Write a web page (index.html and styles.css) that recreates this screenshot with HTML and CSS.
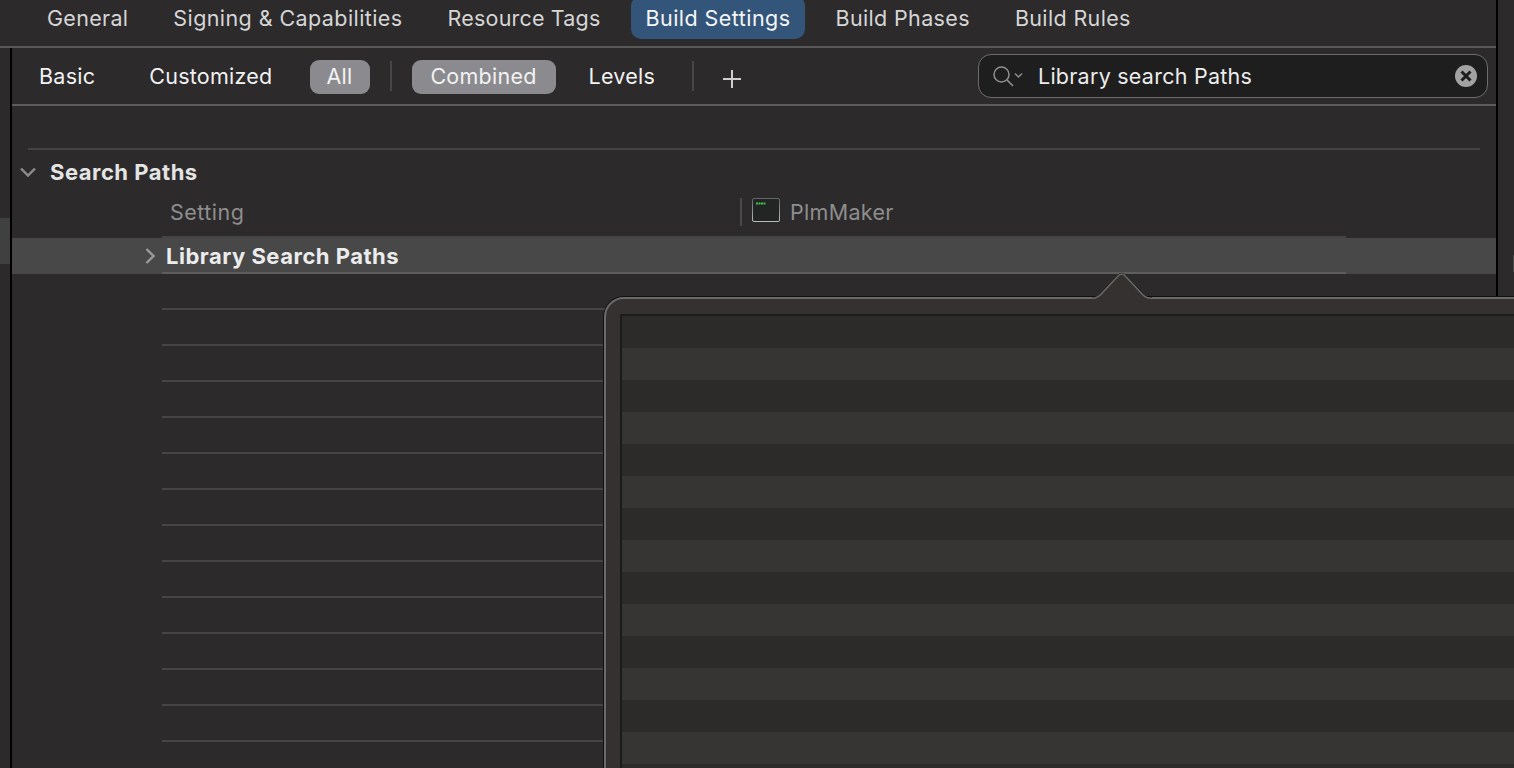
FILE: index.html
```html
<!DOCTYPE html>
<html lang="en">
<head>
<meta charset="utf-8">
<title>Build Settings</title>
<link rel="stylesheet" href="styles.css">
</head>
<body>
<div class="window">
  <div class="content">
    <nav class="tabs">
      <span class="tab tab-general">General</span>
      <span class="tab tab-signing">Signing &amp; Capabilities</span>
      <span class="tab tab-resource">Resource Tags</span>
      <span class="tab tab-active">Build Settings</span>
      <span class="tab">Build Phases</span>
      <span class="tab">Build Rules</span>
    </nav>
    <div class="body">
      <aside class="rail"><div class="rail-mark"></div></aside>
      <main class="main">
        <div class="filters">
          <span class="filter f-basic">Basic</span>
          <span class="filter f-custom">Customized</span>
          <span class="filter pill f-all">All</span>
          <span class="sep sep-a"></span>
          <span class="filter pill f-combined">Combined</span>
          <span class="filter f-levels">Levels</span>
          <span class="sep sep-b"></span>
          <svg class="plus" width="18" height="18" viewBox="0 0 18 18"><path d="M9 0v18M0 9h18" stroke="#cfcfcf" stroke-width="2" fill="none"/></svg>
          <div class="search">
            <svg class="search-icon" width="34" height="26" viewBox="0 0 34 26"><circle cx="10.5" cy="11.5" r="7.5" fill="none" stroke="#8e8e8e" stroke-width="1.5"/><path d="M16 17l6 6" stroke="#8e8e8e" stroke-width="1.7" fill="none"/><path d="M24 10.5l3.5 3.5 3.5-3.5" stroke="#8e8e8e" stroke-width="1.5" fill="none"/></svg>
            <span class="search-text">Library search Paths</span>
            <svg class="clear" width="22" height="22" viewBox="0 0 22 22"><circle cx="11" cy="11" r="11" fill="#a3a3a3"/><path d="M6.5 6.5l9 9M15.5 6.5l-9 9" stroke="#1e1e1e" stroke-width="3" fill="none"/></svg>
          </div>
        </div>
        <div class="section-rule"></div>
        <div class="section">
          <svg class="disclosure" width="18" height="12" viewBox="0 0 18 12"><path d="M2 2.5l7 7 7-7" stroke="#8d8d8d" stroke-width="2.4" fill="none"/></svg>
          <span class="section-title">Search Paths</span>
        </div>
        <div class="head-row">
          <span class="head-setting">Setting</span>
          <span class="head-sep"></span>
          <svg class="target-icon" width="28" height="24" viewBox="0 0 28 24"><defs><linearGradient id="termEdge" x1="0" y1="0" x2="0" y2="1"><stop offset="0" stop-color="#5f6668"/><stop offset="1" stop-color="#b4bcbe"/></linearGradient></defs><rect x=".5" y=".5" width="27" height="23" rx="1.5" fill="#232524" stroke="url(#termEdge)"/><path d="M4 5.5h10" stroke="#3fbf55" stroke-width="2.2" stroke-dasharray="2 .5" fill="none"/></svg>
          <span class="head-target">PlmMaker</span>
        </div>
        <div class="row row-selected">
          <div class="row-inner">
            <svg class="expander" width="12" height="18" viewBox="0 0 12 18"><path d="M2.5 2l7 7-7 7" stroke="#9a9a9a" stroke-width="2.4" fill="none"/></svg>
            <span class="row-title">Library Search Paths</span>
          </div>
        </div>
        <div class="row"><div class="row-inner"></div></div>
        <div class="row"><div class="row-inner"></div></div>
        <div class="row"><div class="row-inner"></div></div>
        <div class="row"><div class="row-inner"></div></div>
        <div class="row"><div class="row-inner"></div></div>
        <div class="row"><div class="row-inner"></div></div>
        <div class="row"><div class="row-inner"></div></div>
        <div class="row"><div class="row-inner"></div></div>
        <div class="row"><div class="row-inner"></div></div>
        <div class="row"><div class="row-inner"></div></div>
        <div class="row"><div class="row-inner"></div></div>
        <div class="row"><div class="row-inner"></div></div>
        <div class="row"><div class="row-inner"></div></div>
      </main>
    </div>
  </div>
  <div class="right-rail"><div class="right-mark"></div></div>
  <div class="popover">
    <svg class="popover-arrow" width="60" height="28" viewBox="0 0 60 28"><path d="M0 27.3C5 27.3 8 25 11.3 20.7L25.3 5.7Q29.7 .5 34 5.7L48 20.7C51.5 25 54 27.3 60 27.3V28H0Z" fill="#353130"/><path d="M0 26.5C5 26.5 7.5 24.5 10.7 20.2L24.7 5.2Q29.7 -.5 34.6 5.2L48.6 20.2C52 24.5 54.5 26.5 60 26.5" fill="none" stroke="#111" stroke-width="1"/><path d="M0 27.3C5 27.3 8 25 11.3 20.7L25.3 5.7Q29.7 .5 34 5.7L48 20.7C51.5 25 54 27.3 60 27.3" fill="none" stroke="#6a6a6a" stroke-width="1.5"/></svg>
    <div class="popover-table">
      <div class="stripe"></div><div class="stripe alt"></div>
      <div class="stripe"></div><div class="stripe alt"></div>
      <div class="stripe"></div><div class="stripe alt"></div>
      <div class="stripe"></div><div class="stripe alt"></div>
      <div class="stripe"></div><div class="stripe alt"></div>
      <div class="stripe"></div><div class="stripe alt"></div>
      <div class="stripe"></div><div class="stripe alt"></div>
      <div class="stripe"></div><div class="stripe alt"></div>
    </div>
  </div>
</div>
</body>
</html>
```
FILE: styles.css
```css
* { box-sizing: border-box; }
html, body { margin: 0; padding: 0; height: 100%; overflow: hidden; }
body {
  background: #2c2a2b;
  font-family: Inter, "Liberation Sans", sans-serif;
  font-size: 22px;
}
.window { position: relative; display: flex; width: 1514px; height: 768px; overflow: hidden; }
.content { width: 1496px; display: flex; flex-direction: column; }
.right-rail { flex: 1; border-left: 2px solid #000; padding-top: 255px; }
.right-mark { width: 1px; height: 17px; margin-left: auto; background: #4a4a4a; }

/* tabs */
.tabs {
  height: 48px;
  flex: none;
  display: flex;
  align-items: flex-start;
  gap: 17px;
  padding: 0 0 0 33px;
  border-bottom: 2px solid #575757;
}
.tab {
  height: 39px;
  padding: 0 14px 4px;
  display: flex;
  align-items: center;
  color: #d6d6d6;
  font-size: 21.5px;
  letter-spacing: 0.35px;
  white-space: nowrap;
}
.tab-general { letter-spacing: 0.3px; }
.tab-signing { letter-spacing: 0.42px; }
.tab-resource { letter-spacing: 0.18px; }
.tab-active {
  height: 43px;
  margin-top: -4px;
  padding-top: 4px;
  background: #34557a;
  color: #f4f5f6;
  letter-spacing: 0.45px;
  border-radius: 10px;
}

/* layout body */
.body { flex: 1; display: flex; min-height: 0; }
.rail { width: 12px; flex: none; border-right: 2px solid #000; padding-top: 170px; }
.rail-mark { height: 46px; background: #404040; }
.main { flex: 1; min-width: 0; }

/* filter bar */
.filters {
  height: 58px;
  display: flex;
  align-items: center;
  padding-left: 27px;
  border-bottom: 2px solid #5c5c5c;
  color: #f2f2f2;
  font-size: 21.5px;
  letter-spacing: 0.25px;
}
.filter { white-space: nowrap; }
.pill {
  height: 34px;
  margin-top: 2px;
  padding-bottom: 2px;
  display: flex;
  align-items: center;
  justify-content: center;
  border-radius: 9px;
  background: #8b8b8f;
}
.f-custom { margin-left: 54px; }
.f-all { margin-left: 37px; width: 60px; }
.sep { width: 2px; height: 30px; background: #474747; }
.sep-a { margin: 0 20px; }
.f-combined { width: 144px; }
.f-levels { margin-left: 33px; }
.sep-b { margin-left: 37px; }
.plus { margin-left: 29px; margin-top: 5px; }
.search {
  margin-left: auto;
  margin-right: 8px;
  width: 510px;
  height: 44px;
  display: flex;
  align-items: center;
  padding-left: 12px;
  padding-right: 10px;
  background: #1e1e1e;
  border: 1.5px solid #6d6d6d;
  border-radius: 13px;
}
.search-icon { flex: none; }
.search-text { margin-left: 13px; color: #ececec; white-space: nowrap; }
.clear { margin-left: auto; flex: none; }

/* section */
.section-rule { height: 2px; margin: 42px 16px 0; background: #444; }
.section { height: 44px; display: flex; align-items: center; padding-left: 7px; }
.disclosure { flex: none; }
.section-title {
  margin-left: 13px;
  font-weight: 700;
  color: #e4e4e4;
  font-size: 22px;
  letter-spacing: 0.5px;
}
.head-row {
  height: 44px;
  margin-left: 150px;
  width: 1184px;
  display: flex;
  align-items: center;
  border-bottom: 2px solid #444;
  padding-left: 8px;
  padding-bottom: 6px;
}
.head-setting { width: 570px; color: #8e8e8e; font-size: 21.5px; letter-spacing: 0.5px; }
.head-sep { width: 2px; height: 28px; background: #4a4a4a; }
.target-icon { margin-left: 10px; margin-top: -4px; flex: none; }
.head-target { margin-left: 10px; color: #8e8e8e; font-size: 21.5px; letter-spacing: 0.3px; }

/* rows */
.row { height: 36px; }
.row-inner {
  height: 36px;
  width: 1184px;
  margin-left: 150px;
  border-bottom: 2px solid #454545;
}
.row-selected { background: #484848; }
.row-selected .row-inner {
  position: relative;
  display: flex;
  align-items: center;
  border-bottom-color: #5e5e5e;
  padding-left: 4px;
  padding-top: 2px;
}
.expander { position: absolute; left: -18px; top: 9px; }
.row-title {
  font-weight: 700;
  color: #ececec;
  font-size: 22px;
  letter-spacing: 0.5px;
  white-space: nowrap;
}

/* popover */
.popover {
  position: absolute;
  left: 604px;
  top: 297px;
  width: 940px;
  height: 500px;
  background: #353130;
  border: 2px solid #6a6a6a;
  border-radius: 20px 0 0 0;
  box-shadow: 0 0 0 1px #111;
  padding: 15px 0 0 14px;
}
.popover-arrow { position: absolute; left: 486px; top: -28px; }
.popover-table {
  border-left: 2px solid #1c1c1a;
  border-top: 2px solid #1c1c1a;
}
.stripe { height: 32px; background: #2c2b29; }
.stripe.alt { background: #363533; }
```
